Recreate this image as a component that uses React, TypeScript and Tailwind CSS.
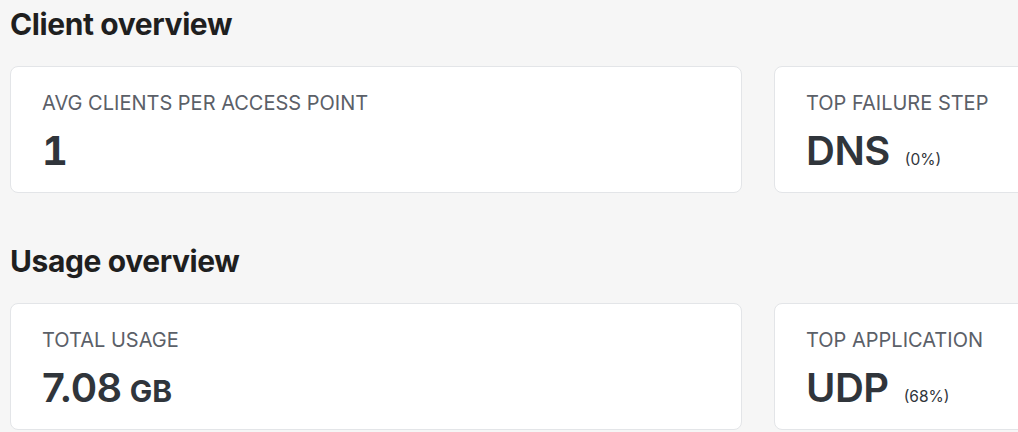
const clientStats = [
  { label: 'AVG CLIENTS PER ACCESS POINT', value: '1' },
  { label: 'TOP FAILURE STEP', value: 'DNS', note: '(0%)' },
];

const usageStats = [
  { label: 'TOTAL USAGE', value: '7.08', unit: 'GB' },
  { label: 'TOP APPLICATION', value: 'UDP', note: '(68%)' },
];

type Stat = { label: string; value: string; unit?: string; note?: string };

const StatCard = ({ stat }: { stat: Stat }) => (
  <div className="w-[732px] shrink-0 h-[127px] bg-white border border-[#e3e5e8] rounded-lg px-[31px] pt-[22px]">
    <div className="text-[20px] leading-[28px] text-[#5b6068]">{stat.label}</div>
    <div className="mt-[10px] flex items-baseline text-[#30353b] leading-[48px]">
      {/* the "1" has a foot in the reference -> tabular figures */}
      <span className={stat.value === '1' ? 'text-[40px] font-bold tabular-nums' : 'text-[40px] font-semibold tracking-[-0.5px]'}>
        {stat.value}
      </span>
      {stat.unit && <span className="ml-[8px] text-[30px] font-bold">{stat.unit}</span>}
      {stat.note && <span className="ml-[15px] text-[15.5px] text-[#30353b]">{stat.note}</span>}
    </div>
  </div>
);

const Section = ({ title, stats }: { title: string; stats: Stat[] }) => (
  <section>
    <h2 className="text-[30px] leading-[36px] font-bold text-[#1f1f1f] tracking-[-0.4px]">{title}</h2>
    <div className="mt-[24px] flex gap-8">
      {stats.map((s) => (
        <StatCard key={s.label} stat={s} />
      ))}
    </div>
  </section>
);

export default function App() {
  return (
    <div
      className="w-[1018px] h-[432px] overflow-hidden bg-[#f6f6f6] pl-[10px] pt-[6px]"
      style={{ fontFamily: 'Inter, "Noto Sans", sans-serif' }}
    >
      <Section title="Client overview" stats={clientStats} />
      <div className="h-[50px]" />
      <Section title="Usage overview" stats={usageStats} />
    </div>
  );
}
